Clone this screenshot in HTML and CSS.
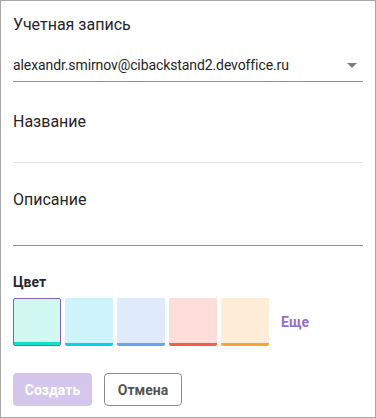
FILE: index.html
```html
<!DOCTYPE html>
<html lang="ru">
<head>
    <meta charset="UTF-8">
    <meta name="viewport" content="width=device-width, initial-scale=1.0">
    <title>Календарь</title>
    <link rel="stylesheet" href="styles.css">
</head>
<body>
    <div class="dialog">
        <div class="field">
            <div class="label">Учетная запись</div>
            <div class="select">
                <span class="select-value">alexandr.smirnov@cibackstand2.devoffice.ru</span>
                <svg class="select-arrow" width="10" height="5" viewBox="0 0 10 5"><path d="M0 0h10L5 5z" fill="#7a7a7a"/></svg>
            </div>
        </div>

        <div class="field field-name">
            <div class="label">Название</div>
            <div class="input input-name"></div>
        </div>

        <div class="field field-desc">
            <div class="label">Описание</div>
            <div class="input input-desc"></div>
        </div>

        <div class="colors">
            <div class="colors-title">Цвет</div>
            <div class="swatches">
                <div class="swatch swatch-mint selected"></div>
                <div class="swatch swatch-cyan"></div>
                <div class="swatch swatch-blue"></div>
                <div class="swatch swatch-red"></div>
                <div class="swatch swatch-orange"></div>
                <span class="more">Еще</span>
            </div>
        </div>

        <div class="actions">
            <button type="button" class="btn btn-primary">Создать</button>
            <button type="button" class="btn btn-cancel">Отмена</button>
        </div>
    </div>
</body>
</html>
```

FILE: styles.css
```css
html, body {
    margin: 0;
    padding: 0;
}
body {
    background-color: #fff;
    color: #212121;
    font-family: Roboto, "Liberation Sans", sans-serif;
}
.dialog {
    box-sizing: border-box;
    width: 376px;
    height: 418px;
    border: 1px solid #a6a6a6;
    padding: 13px 12px 0 12px;
}
.label {
    font-size: 16px;
    line-height: 22px;
    color: #262626;
}
.select {
    display: flex;
    align-items: center;
    justify-content: space-between;
    margin-top: 13px;
    height: 32px;
    border-bottom: 1px solid #8f8f8f;
}
.select-value {
    font-size: 14px;
    letter-spacing: -0.1px;
    color: #262626;
}
.select-arrow {
    margin-right: 6px;
}
.field-name {
    margin-top: 29px;
}
.field-desc {
    margin-top: 26px;
}
.input-name {
    height: 29px;
    border-bottom: 1px solid #e2e2e2;
}
.input-desc {
    height: 34px;
    border-bottom: 1px solid #8f8f8f;
}

/* Color picker */
.colors {
    margin-top: 27px;
}
.colors-title {
    font-size: 14px;
    font-weight: bold;
    line-height: 18px;
    color: #2a2a2a;
}
.swatches {
    display: flex;
    align-items: center;
    gap: 4px;
    margin-top: 7px;
}
.swatch {
    box-sizing: border-box;
    width: 48px;
    height: 48px;
    border-radius: 2px;
    border-bottom: 3px solid;
}
.swatch.selected {
    border: 1px solid #8560c6;
    box-shadow: inset 0 -3px 0 #14e0c6;
}
.swatch-mint { background-color: #d2f8f2; border-bottom-color: #14e0c6; }
.swatch-cyan { background-color: #cdf4fa; border-bottom-color: #00d2f0; }
.swatch-blue { background-color: #dfebfd; border-bottom-color: #66a2f6; }
.swatch-red { background-color: #ffdeda; border-bottom-color: #f95b47; }
.swatch-orange { background-color: #ffecd7; border-bottom-color: #ffa233; }
.more {
    margin-left: 8px;
    font-size: 14px;
    font-weight: bold;
    color: #9272c9;
}

/* Buttons */
.actions {
    display: flex;
    gap: 12px;
    margin-top: 27px;
}
.btn {
    height: 33px;
    padding: 0;
    border-radius: 4px;
    font-family: Roboto, "Liberation Sans", sans-serif;
    font-size: 14px;
    font-weight: bold;
    cursor: pointer;
}
.btn-primary {
    width: 79px;
    background-color: #d4c6ec;
    border: none;
    color: #fff;
}
.btn-cancel {
    width: 78px;
    background-color: #fff;
    border: 1px solid #8c8c8c;
    color: #555;
}
```
